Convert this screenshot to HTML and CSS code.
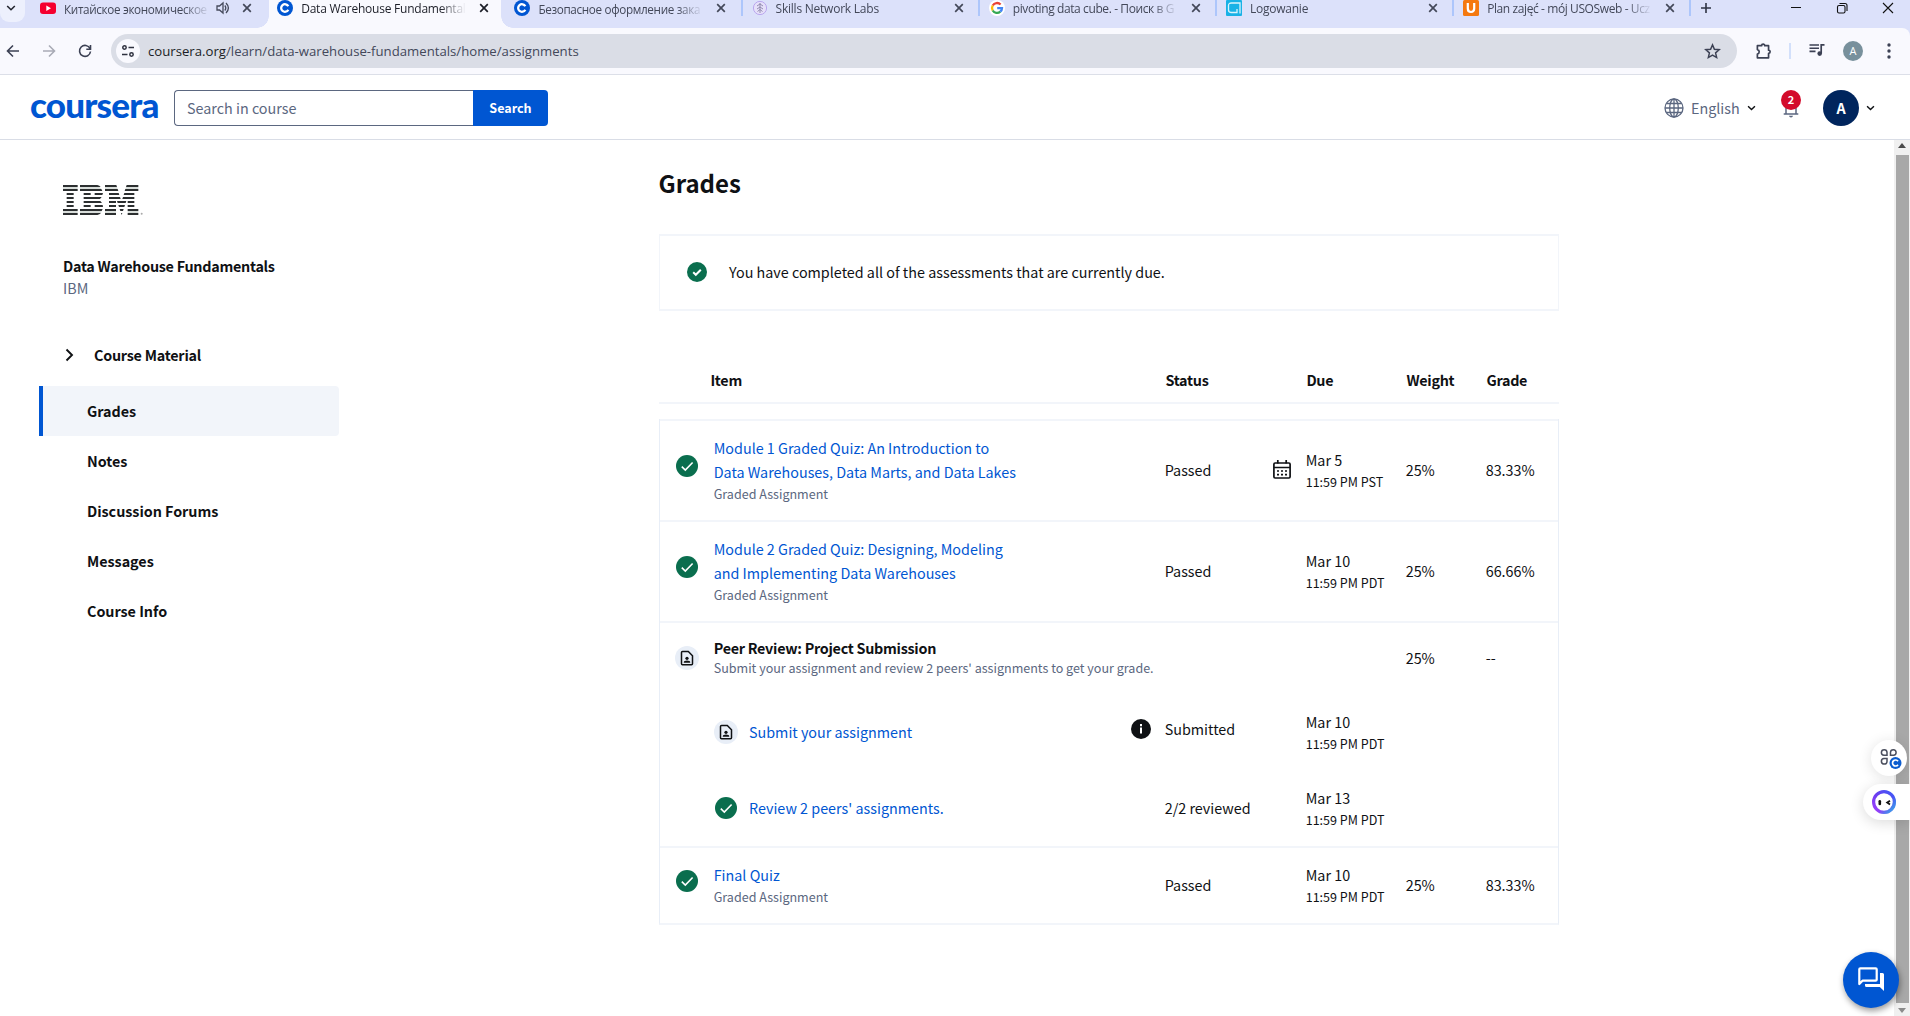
FILE: index.html
```html
<!DOCTYPE html>
<html lang="en">
<head>
<meta charset="utf-8">
<title>Data Warehouse Fundamentals - Grades</title>
<link rel="stylesheet" href="styles.css">
</head>
<body>
<svg class="defs" width="0" height="0" aria-hidden="true">
  <symbol id="x" viewBox="0 0 10 10"><path d="M1.2 1.2l7.6 7.6M8.800 1.200L1.200 8.800" stroke="currentColor" stroke-width="1.7" fill="none"/></symbol>
  <symbol id="chev" viewBox="0 0 10 6"><path d="M1.200 1L5 4.700 8.800 1" stroke="currentColor" stroke-width="1.600" fill="none"/></symbol>
  <symbol id="check" viewBox="0 0 22 22"><circle cx="11" cy="11" r="11" fill="#0a6e4e"/><path d="M5.800 11.600l3.500 3.400 7.300-7.500" stroke="#fff" stroke-width="1.600" fill="none"/></symbol>
  <symbol id="doc" viewBox="0 0 24 24"><circle cx="12" cy="12" r="12" fill="#e8eef7"/><path d="M7.500 5.500h5.800l4.200 4.200v8.100q0 1-1 1h-9q-1 0-1-1v-11.300q0-1 1-1z" fill="none" stroke="#0f1114" stroke-width="1.500"/><circle cx="12" cy="12.300" r="1.600" fill="#0f1114"/><path d="M8.800 16.800v-.7q0-1.600 3.200-1.600t3.200 1.600v.7z" fill="#0f1114"/></symbol>
  <symbol id="cfav" viewBox="0 0 16 16"><circle cx="8" cy="8" r="8" fill="#0056d2"/><path d="M11.300 6.200A3.800 3.800 0 1 0 11.300 9.800" fill="none" stroke="#fff" stroke-width="2.300"/></symbol>
</svg>

<header class="browser">
  <div class="tabs">
    <div class="tab-search"><svg width="10" height="6"><use href="#chev"/></svg></div>
    <div class="tab playing">
      <svg class="fav" viewBox="0 0 16 16"><rect y="2.500" width="16" height="11.500" rx="3" fill="#f5002f"/><path d="M6.300 5.500v5.400L11 8.200z" fill="#fff"/></svg>
      <span class="tab-title cyr">Китайское экономическое</span>
      <svg class="sound" viewBox="0 0 14 14"><path d="M1 5h2.500L7 2v10L3.500 9H1z" fill="none" stroke="#454a5c" stroke-width="1.300"/><path d="M8.800 4.500q2 2.500 0 5M10 2q4.800 5 0 10" fill="none" stroke="#454a5c" stroke-width="1.300"/></svg>
      <svg class="close"><use href="#x"/></svg>
    </div>
    <div class="tab active">
      <svg class="fav"><use href="#cfav"/></svg>
      <span class="tab-title">Data Warehouse Fundamentals</span>
      <svg class="close"><use href="#x"/></svg>
    </div>
    <div class="tab">
      <svg class="fav"><use href="#cfav"/></svg>
      <span class="tab-title cyr">Безопасное оформление зака</span>
      <svg class="close"><use href="#x"/></svg>
    </div>
    <div class="tab sep">
      <svg class="fav" viewBox="0 0 16 16"><circle cx="8" cy="8" r="6.600" fill="#e6e0fa" stroke="#b9a6ee"/><path d="M8 3v10M5 6l3-2 3 2M5 9l3-2 3 2M5.500 11.500L8 9.500l2.500 2" fill="none" stroke="#8b84a8" stroke-width=".9"/></svg>
      <span class="tab-title">Skills Network Labs</span>
      <svg class="close"><use href="#x"/></svg>
    </div>
    <div class="tab sep">
      <svg class="fav" viewBox="0 0 16 16"><circle cx="8" cy="8" r="8" fill="#fff"/><g fill="none" stroke-width="2.300"><path d="M11.600 4.500A5 5 0 0 0 3.700 5.500" stroke="#ea4335"/><path d="M3.700 5.500A5 5 0 0 0 3.700 10.500" stroke="#fbbc05"/><path d="M3.700 10.500A5 5 0 0 0 11.300 11.700" stroke="#34a853"/><path d="M11.300 11.700A5 5 0 0 0 13 8.100H8.200" stroke="#4285f4"/></g></svg>
      <span class="tab-title tight">pivoting data cube. - Поиск в G</span>
      <svg class="close"><use href="#x"/></svg>
    </div>
    <div class="tab sep">
      <svg class="fav" viewBox="0 0 16 16"><rect width="16" height="16" rx="1" fill="#19b2e6"/><path d="M14 13.500V3H5.500Q2.500 3 2.500 5.500v4.500q0 2.500 3 2.500H11V9" fill="none" stroke="#d9f3fc" stroke-width="1.300"/></svg>
      <span class="tab-title">Logowanie</span>
      <svg class="close"><use href="#x"/></svg>
    </div>
    <div class="tab sep">
      <svg class="fav" viewBox="0 0 16 16"><rect width="16" height="16" rx="1.500" fill="#f5790f"/><path d="M4.800 3v5.500q0 3.500 3.200 3.500t3.200-3.500V3" fill="none" stroke="#fff" stroke-width="2.200"/></svg>
      <span class="tab-title tight">Plan zajęć - mój USOSweb - Ucz</span>
      <svg class="close"><use href="#x"/></svg>
    </div>
    <div class="newtab sep"><svg width="12" height="12" viewBox="0 0 12 12"><path d="M6 1v10M1 6h10" stroke="#2f3444" stroke-width="1.600"/></svg></div>
    <div class="window">
      <svg width="12" height="12" viewBox="0 0 12 12"><path d="M1 5.500h10" stroke="#111"/></svg>
      <svg width="12" height="12" viewBox="0 0 12 12"><g fill="none" stroke="#111" stroke-width="1.100"><rect x="1.500" y="3.500" width="7.500" height="7.500" rx="1.500"/><path d="M3.500 1.500H9q2 0 2 2v5.500"/></g></svg>
      <svg width="12" height="12" viewBox="0 0 12 12"><path d="M1 1l10 10M11 1L1 11" stroke="#111" stroke-width="1.100"/></svg>
    </div>
  </div>
  <div class="toolbar">
    <svg class="nav" viewBox="0 0 16 16"><path d="M14 8H3M8 2.500L2.500 8 8 13.500" fill="none" stroke="#3c4154" stroke-width="1.600"/></svg>
    <svg class="nav" viewBox="0 0 16 16"><path d="M2 8h11M8 2.500L13.500 8 8 13.500" fill="none" stroke="#a9abb6" stroke-width="1.600"/></svg>
    <svg class="nav" viewBox="0 0 16 16"><path d="M13 5.500A5.500 5.500 0 1 0 13.500 8.500M13.500 2v4.200H9.300" fill="none" stroke="#3c4154" stroke-width="1.600"/></svg>
    <div class="omnibox">
      <span class="site"><svg width="14" height="14" viewBox="0 0 14 14" fill="none" stroke="#2f3240" stroke-width="1.500"><circle cx="3.500" cy="3.500" r="1.700"/><path d="M7.500 3.500H13M1 10.500h5.500"/><circle cx="10.500" cy="10.500" r="1.700"/></svg></span>
      <span class="url"><b>coursera.org</b>/learn/data-warehouse-fundamentals/home/assignments</span>
      <svg class="star" viewBox="0 0 16 16"><path d="M8 1.800l1.800 4.100 4.500.4-3.400 3 1 4.400L8 11.400l-3.900 2.300 1-4.400-3.400-3 4.500-.4z" fill="none" stroke="#3c4154" stroke-width="1.400"/></svg>
    </div>
    <svg class="puzzle" viewBox="0 0 18 18"><path d="M3.200 3.500h4a1.500 1.500 0 0 1 3 0h3.600v4.300a1.500 1.500 0 0 1 0 3v4.200H3.200v-3.500a2.200 2.200 0 0 0 0-4.300z" fill="none" stroke="#3c4154" stroke-width="1.600" stroke-linejoin="round"/></svg>
    <i class="bar"></i>
    <svg class="queue" viewBox="0 0 16 14"><path d="M.5 2h9.500M.5 5.200h9.500M.5 8.400h6" stroke="#3c4154" stroke-width="1.600"/><path d="M12.200 10.500V1.800h3.300" stroke="#3c4154" stroke-width="1.700" fill="none"/><circle cx="10.700" cy="10.600" r="2.300" fill="#3c4154"/></svg>
    <span class="profile">A</span>
    <svg class="dots" viewBox="0 0 4 16"><circle cx="2" cy="2" r="1.700"/><circle cx="2" cy="8" r="1.700"/><circle cx="2" cy="14" r="1.700"/></svg>
  </div>
</header>

<div class="site-header">
  <div class="logo">coursera</div>
  <div class="search"><span class="field">Search in course</span><span class="go">Search</span></div>
  <div class="account">
    <svg width="20" height="20" viewBox="0 0 20 20" fill="none" stroke="#5b6780" stroke-width="1.300"><circle cx="10" cy="10" r="9"/><ellipse cx="10" cy="10" rx="4.300" ry="9"/><path d="M10 1v18M1 10h18M2.500 5.500h15M2.500 14.500h15"/></svg>
    <span class="lang">English</span>
    <svg class="c1" width="9" height="6"><use href="#chev"/></svg>
    <div class="bell">
      <svg width="16" height="20" viewBox="0 0 16 20"><path d="M3 16V8q0-5 5-5t5 5v8M.7 16h14.600" fill="none" stroke="#5b6780" stroke-width="1.500"/><path d="M6 17.800h4q-.3 1.700-2 1.700t-2-1.700z" fill="#5b6780"/></svg>
      <span class="badge">2</span>
    </div>
    <span class="avatar">A</span>
    <svg class="c2" width="9" height="6"><use href="#chev"/></svg>
  </div>
</div>

<div class="page">
  <aside class="side">
    <svg class="ibm" viewBox="0 0 240 90" fill="#2c2f30">
      <path d="M0 6h44v6H0zM51 6h58l6 6H51zM126 6h36l2 6h-38zM189 6h37v6h-39zM0 78h44v6H0zM51 78h65l-2 6H51zM126 78h33v6h-33zM194 78h32v6h-32z" fill="#d9dedb"/>
      <path d="M0 0h44v6H0zM0 12h44v6H0zM11 24h21v6H11zM11 36h21v6H11zM11 48h21v6H11zM11 60h21v6H11zM0 72h44v6H0zM0 84h44v6H0z"/>
      <path d="M51 0h52q7 2 10 6H51zM51 12h64l3 6H51zM62 24h21v6H62zM95 24h25l-2 6H95zM62 36h54l-5 6H62zM62 48h50l5 6H62zM62 60h21v6H62zM95 60h24l1 6H95zM51 72h68l-3 6H51zM51 84h63q-4 5-11 6H51z"/>
      <path d="M126 0h34l2 6h-36zM126 12h38l2 6h-40zM138 24h29l2 6h-31zM138 36h33l2 6h-35zM138 48h21v6h-21zM162 48h28l-2 6h-24zM138 60h21v6h-21zM166 60h20l-2 6h-16zM126 72h33v6h-33zM170 72h12l-2 6h-8zM126 84h33v6h-33zM174 84h4l-2 6zM191 0h35v6h-37zM187 12h39v6h-41zM184 24h30v6h-32zM180 36h34v6h-36zM194 48h20v6h-20zM194 60h20v6h-20zM194 72h32v6h-32zM194 84h32v6h-32z"/>
      <circle cx="236" cy="86" r="3" fill="#aaa"/>
    </svg>
    <div class="course">Data Warehouse Fundamentals</div>
    <div class="org">IBM</div>
    <div class="material"><svg width="9" height="14" viewBox="0 0 9 14"><path d="M1.500 1.500L7 7l-5.500 5.500" fill="none" stroke="#0f1114" stroke-width="1.900"/></svg>Course Material</div>
    <nav>
      <a class="on">Grades</a><a>Notes</a><a>Discussion Forums</a><a>Messages</a><a>Course Info</a>
    </nav>
  </aside>

  <main>
    <h1>Grades</h1>
    <div class="notice"><svg width="20" height="20" viewBox="0 0 20 20"><circle cx="10" cy="10" r="10" fill="#0a6e4e"/><path d="M6.200 10.300l2.600 2.500 5-5.100" fill="none" stroke="#fff" stroke-width="2"/></svg>You have completed all of the assessments that are currently due.</div>

    <div class="head"><span>Item</span><span>Status</span><span>Due</span><span>Weight</span><span>Grade</span></div>

    <div class="table">
      <div class="row quiz">
        <svg class="ic up"><use href="#check"/></svg>
        <div class="item"><a>Module 1 Graded Quiz: An Introduction to<br>Data Warehouses, Data Marts, and Data Lakes</a><small>Graded Assignment</small></div>
        <div class="status">Passed</div>
        <svg class="cal" viewBox="0 0 18 19"><rect x=".9" y="3" width="16.200" height="15" rx="1.200" fill="none" stroke="#0f1114" stroke-width="1.700"/><path d="M1 7.500h16M4.800 0v3.500M13.200 0v3.500" stroke="#0f1114" stroke-width="1.700"/><path d="M4 11h2M8 11h2M12 11h2M4 14.700h2M8 14.700h2M12 14.700h2" stroke="#0f1114" stroke-width="1.700"/></svg>
        <div class="due">Mar 5<small>11:59 PM PST</small></div>
        <div class="weight">25%</div><div class="grade">83.33%</div>
      </div>
      <div class="row quiz">
        <svg class="ic up"><use href="#check"/></svg>
        <div class="item"><a>Module 2 Graded Quiz: Designing, Modeling<br>and Implementing Data Warehouses</a><small>Graded Assignment</small></div>
        <div class="status">Passed</div>
        <div class="due">Mar 10<small>11:59 PM PDT</small></div>
        <div class="weight">25%</div><div class="grade">66.66%</div>
      </div>
      <div class="group">
        <div class="row peer">
          <svg class="ic doc"><use href="#doc"/></svg>
          <div class="item"><strong>Peer Review: Project Submission</strong><small>Submit your assignment and review 2 peers' assignments to get your grade.</small></div>
          <div class="weight">25%</div><div class="grade">--</div>
        </div>
        <div class="row step submit">
          <div class="item sub"><svg class="doc"><use href="#doc"/></svg><a>Submit your assignment</a></div>
          <svg class="info" viewBox="0 0 20 20"><circle cx="10" cy="10" r="10" fill="#0f1114"/><path d="M10 8.500v6M10 5v2.200" stroke="#fff" stroke-width="2"/></svg>
          <div class="status raised">Submitted</div>
          <div class="due">Mar 10<small>11:59 PM PDT</small></div>
        </div>
        <div class="row step">
          <div class="item sub"><svg class="done"><use href="#check"/></svg><a>Review 2 peers' assignments.</a></div>
          <div class="status">2/2 reviewed</div>
          <div class="due">Mar 13<small>11:59 PM PDT</small></div>
        </div>
      </div>
      <div class="row final">
        <svg class="ic up"><use href="#check"/></svg>
        <div class="item"><a>Final Quiz</a><small>Graded Assignment</small></div>
        <div class="status">Passed</div>
        <div class="due">Mar 10<small>11:59 PM PDT</small></div>
        <div class="weight">25%</div><div class="grade">83.33%</div>
      </div>
    </div>
  </main>

  <div class="scrollbar">
    <svg width="8" height="5" viewBox="0 0 8 5"><path d="M0 5l4-5 4 5z" fill="#4a4a4a"/></svg>
    <i></i>
    <svg width="8" height="5" viewBox="0 0 8 5"><path d="M0 0l4 5 4-5z" fill="#8b8b8b"/></svg>
  </div>
</div>

<div class="apps"><svg width="34" height="34" viewBox="0 0 34 34"><g fill="none" stroke="#4b4f5e" stroke-width="1.500"><path d="M15 15.300h-3a2.800 2.800 0 1 1 3-2.900zM18.500 15.300v-3a2.800 2.800 0 1 1 3 3zM15 18.500v3a2.800 2.800 0 1 1-3-3z"/></g><circle cx="23.500" cy="23" r="6" fill="#0b5ccf"/><path d="M26 21.300a3 3 0 1 0 0 3.400" fill="none" stroke="#fff" stroke-width="1.700"/></svg></div>
<div class="assistant"><svg width="24" height="24" viewBox="0 0 24 24"><defs><linearGradient id="ring" x1="0" y1="1" x2="1" y2="0"><stop offset="0" stop-color="#a13ffc"/><stop offset=".5" stop-color="#6a3df0"/><stop offset="1" stop-color="#3b5cf6"/></linearGradient><linearGradient id="aqua" x1="0" y1="0" x2="1" y2="1"><stop offset=".6" stop-color="#2bb8e8" stop-opacity="0"/><stop offset="1" stop-color="#2bb8e8"/></linearGradient></defs><circle cx="12" cy="12" r="10.400" fill="#fff" stroke="url(#ring)" stroke-width="3.200"/><circle cx="12" cy="12" r="10.400" fill="none" stroke="url(#aqua)" stroke-width="3.200"/><path d="M7.800 11.200v2.800" stroke="#111" stroke-width="2.600" stroke-linecap="round"/><path d="M18 10.700l-2.800 1.900 2.800 1.900" fill="none" stroke="#111" stroke-width="1.800"/></svg></div>
<div class="chat"><svg width="26" height="25" viewBox="0 0 26 25"><path d="M1.300 17V2.300q0-1 1-1h15.400q1 0 1 1v10.400q0 1-1 1H4.500z" fill="none" stroke="#fff" stroke-width="2.200" stroke-linejoin="round"/><path d="M22 6h2.500q1.500 0 1.500 1.500V24l-4.200-4H8.500Q7 20 7 18.500V17h15z" fill="#fff"/></svg></div>
</body>
</html>
```
FILE: styles.css
```css
* { box-sizing: border-box; }
body {
  margin: 0;
  width: 1910px;
  height: 1016px;
  overflow: hidden;
  background: #fff;
  color: #0f1114;
  font: 14.35px/24px "Noto Sans CJK SC", "Source Sans Pro", sans-serif;
}
svg { display: block; flex: none; }
.defs { position: absolute; }

/* Browser chrome */
.browser { height: 75px; background: #dce1fa; border-bottom: 1px solid #dcdfe8; font-family: "Open Sans", sans-serif; }
.tabs { display: flex; height: 28px; }
.tab-search { width: 25px; height: 22px; margin-right: 5px; background: #edf0fd; border-radius: 0 0 9px 9px; padding: 5px 0 0 6px; flex: none; color: #22252f; }
.tab { position: relative; flex: 0 0 237.200px; display: flex; align-items: center; height: 16px; padding-left: 10px; color: #434859; }
.fav { width: 16px; height: 16px; }
.tab-title {
  margin: 2px 0 0 8px; width: 165px; flex: none; white-space: nowrap;
  font-size: 12px; line-height: 18px; letter-spacing: -.23px;
  -webkit-mask-image: linear-gradient(90deg, #000 calc(100% - 26px), transparent);
  mask-image: linear-gradient(90deg, #000 calc(100% - 26px), transparent);
}
.cyr { font-size: 11.700px; letter-spacing: -.33px; }
.tight { letter-spacing: -.4px; }
.close { width: 10px; height: 10px; margin-left: 13px; }
.playing .tab-title { width: 146px; }
.sound { width: 14px; height: 14px; margin-left: 6px; }
.playing .close { margin-left: 12px; }
.active { height: 28px; padding-bottom: 12px; color: #1d1f28; }
.active::before { content: ""; position: absolute; left: 2.200px; right: 3px; top: 0; bottom: 0; background: #f9f9fe; }
.active::after {
  content: ""; position: absolute; left: -9.800px; right: -9px; bottom: 0; height: 12px;
  background: radial-gradient(circle at 0 0, transparent 11.500px, #f9f9fe 12px) left / 12px 12px no-repeat,
    radial-gradient(circle at 100% 0, transparent 11.500px, #f9f9fe 12px) right / 12px 12px no-repeat;
}
.active > * { position: relative; }
.sep::before { content: ""; position: absolute; left: -1px; top: 0; width: 2px; height: 16px; background: #adc6fb; }
.newtab { position: relative; height: 16px; padding: 2px 0 0 10px; }
.window { display: flex; gap: 34px; margin-left: auto; padding: 2px 16px 0 0; }
.toolbar { display: flex; align-items: center; height: 46px; background: #f9f9fe; border-radius: 0 8px 0 0; }
.nav { width: 16px; height: 16px; margin-left: 5px; }
.nav + .nav { margin-left: 20px; }
.omnibox { display: flex; align-items: center; width: 1626px; height: 34px; margin-left: 18px; padding: 0 16px 0 5px; background: #dadde6; border-radius: 17px; }
.site { width: 24px; height: 24px; border-radius: 50%; background: #f9f9fe; padding: 5px; }
.url { margin-left: 8px; font-size: 13.180px; line-height: 20px; color: #43485a; }
.url b { font-weight: 400; color: #1b1d25; }
.star { width: 17px; height: 17px; margin-left: auto; }
.puzzle { width: 19px; height: 19px; margin-left: 17px; }
.bar { width: 2px; height: 16px; margin-left: 16px; background: #d3e0fb; }
.queue { width: 16px; height: 14px; margin: 0 0 3px 18px; }
.profile { width: 20px; height: 20px; margin-left: 18px; border-radius: 50%; background: #78909c; color: #fff; font-size: 11px; line-height: 20px; text-align: center; }
.dots { width: 4px; height: 16px; margin-left: 24px; fill: #3c4154; }

/* Site header */
.site-header { display: flex; align-items: center; height: 65px; padding-top: 2px; border-bottom: 1px solid #d9dde6; }
.logo { width: 144px; margin-left: 30px; flex: none; color: #0056d2; font: 900 35px/36px Lato, sans-serif; letter-spacing: -.8px; padding-bottom: 8px; }
.search { display: flex; width: 374px; height: 36px; }
.field { flex: 1; padding-left: 12px; border: 1px solid #5b6780; border-right: 0; border-radius: 4px 0 0 4px; color: #5b6780; line-height: 34px; }
.go { width: 75px; background: #0056d2; color: #fff; border-radius: 0 4px 4px 0; font-size: 12.550px; font-weight: 700; line-height: 35px; text-align: center; }
.account { display: flex; align-items: center; margin-left: auto; padding-right: 35px; }
.lang { margin-left: 7px; color: #5b6780; width: 48px; }
.c1 { margin-left: 8px; }
.bell { position: relative; margin-left: 27px; }
.badge { position: absolute; left: -2px; top: -8px; width: 20px; height: 20px; border-radius: 50%; background: #d30b2b; color: #fff; font-size: 11px; font-weight: 700; line-height: 19px; text-align: center; }
.avatar { width: 36px; height: 36px; margin-left: 24px; border-radius: 50%; background: #00255d; color: #fff; font-weight: 700; line-height: 35px; text-align: center; }
.c2 { margin-left: 7px; }

/* Page layout */
.page { display: flex; height: 876px; }
.side { width: 300px; margin-left: 39px; flex: none; padding-top: 45px; font-weight: 700; letter-spacing: -.27px; }
.ibm { width: 80px; height: 30px; margin-left: 24px; }
.course { margin: 38.500px 0 0 24px; }
.org { margin-left: 24px; line-height: 19px; font-weight: 400; color: #5b6780; letter-spacing: 0; }
.material { display: flex; align-items: center; gap: 20px; margin: 46.500px 0 19px 26px; letter-spacing: -.23px; }
nav a { display: block; height: 50px; padding-left: 48px; line-height: 49px; letter-spacing: -.03px; }
nav .on { background: #f2f5fa; border-left: 4px solid #0056d2; border-radius: 0 4px 4px 0; padding-left: 44px; }
main { width: 900px; margin-left: 320px; padding-top: 27px; flex: none; }
h1 { margin: 0 0 35px -.5px; font-size: 24px; line-height: 32px; }
.notice { display: flex; align-items: center; gap: 22px; height: 77px; padding: 0 0 2px 27px; border: solid #f2f5fa; border-width: 2px 1px; }

/* Grades table */
.head { display: grid; grid-template-columns: 51.400px 455px 141px 100px 80px 1fr; height: 41px; margin: 52px 0 15px; border-bottom: 2px solid #f2f5fa; font-weight: 700; line-height: 34px; letter-spacing: -.27px; }
.head span:first-child { grid-column: 2; }
.table { border: 1px solid #e8eef7; border-width: 0 1px; border-bottom: 2px solid #f2f5fa; }
.row { display: grid; grid-template-columns: 53.700px 418px 33px 108px 33px 100px 80px 1fr; align-items: center; }
.row > * { grid-row: 1; }
.quiz { height: 101px; border-top: 2px solid #f2f5fa; padding-bottom: 2px; }
.group { border-top: 2px solid #f2f5fa; }
.peer { height: 70px; }
.step { height: 76px; }
.submit { height: 77px; }
.final { height: 77px; border-top: 2px solid #f2f5fa; padding-bottom: 2px; }
a, small, strong { display: block; }
small { font-size: 12.550px; line-height: 20px; }
.item small { color: #5b6780; }
.item a { color: #0056d2; }
.item { grid-column: 2 / 4; }
.peer .item { padding-bottom: 2px; }
.peer strong { line-height: 21px; letter-spacing: -.27px; }
.peer small { line-height: 19px; }
.ic { grid-column: 1; width: 22px; height: 22px; margin-left: 16px; }
.up { margin-bottom: 7px; }
.doc { width: 24px; height: 24px; }
.ic.doc { margin-left: 15px; }
.done { width: 22px; height: 22px; margin: 0 1px; }
.sub { display: flex; align-items: center; gap: 11px; padding-left: .3px; }
.status { grid-column: 4; }
.raised { margin-bottom: 5px; }
.info { grid-column: 3; width: 20px; height: 20px; margin: 0 0 5px -.7px; }
.cal { grid-column: 5; width: 18px; height: 19px; margin-left: .3px; }
.due { grid-column: 6; }
.weight { grid-column: 7; }
.grade { grid-column: 8; }

/* Scrollbar and floating widgets */
.scrollbar { display: flex; flex-direction: column; align-items: center; width: 16px; margin-left: auto; padding: 3px 0; background: #f0f0f0; }
.scrollbar i { width: 13px; height: 848px; margin: 7px 0 5px 1px; background: #a8a8a8; flex: none; }
.apps { position: absolute; left: 1871px; top: 740px; width: 36px; height: 36px; padding: 0 1px; border-radius: 50%; background: #fff; box-shadow: 0 2px 14px rgba(0, 0, 0, .12); }
.assistant { position: absolute; left: 1863px; top: 784px; width: 47px; height: 36px; padding: 6px 9px; border-radius: 18px 0 0 18px; background: #fff; box-shadow: 0 3px 14px rgba(0, 0, 0, .14); }
.chat { position: absolute; left: 1843px; top: 952px; width: 56px; height: 56px; padding: 15px; border-radius: 50%; background: #0056d2; box-shadow: 1px 3px 6px rgba(0, 0, 0, .4); }
```
